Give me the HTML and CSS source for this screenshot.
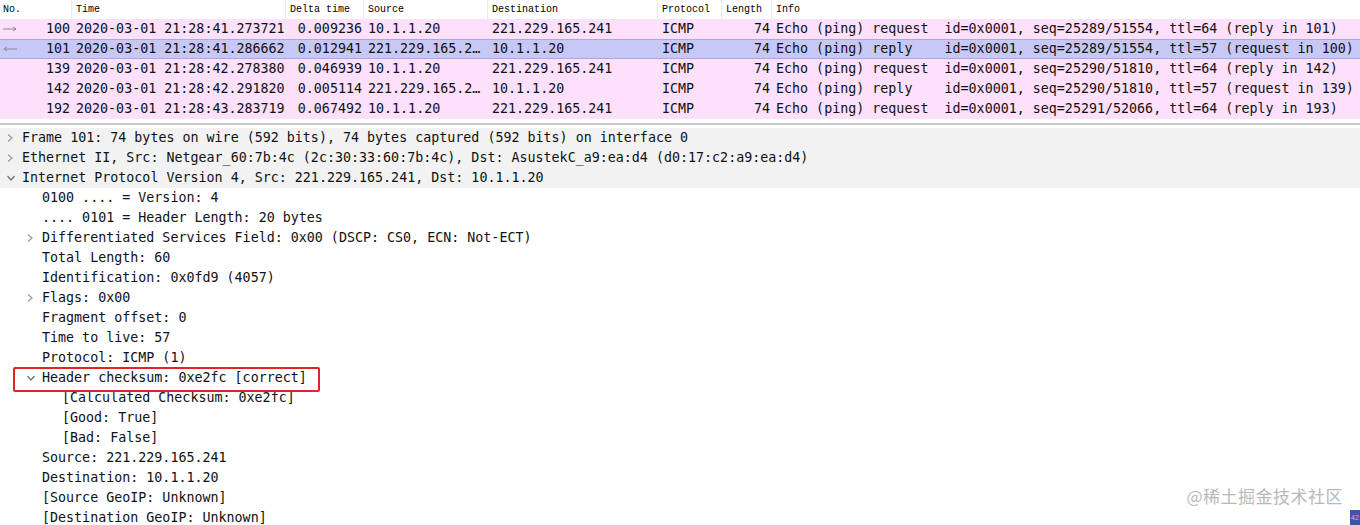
FILE: index.html
```html
<!DOCTYPE html>
<html>
<head>
<meta charset="utf-8">
<link rel="stylesheet" href="styles.css">
</head>
<body>
<div class="plist">
  <div class="prow head">
    <div class="c c1">No.</div>
    <div class="c c2">Time</div>
    <div class="c c3">Delta time</div>
    <div class="c c4">Source</div>
    <div class="c c5">Destination</div>
    <div class="c c6">Protocol</div>
    <div class="c c7">Length</div>
    <div class="c c8">Info</div>
  </div>
  <div class="prow icmp">
    <div class="c c1 num"><svg class="arr" width="18" height="8" viewBox="0 0 18 8"><path d="M2 4H15M12 2L15 4L12 6" stroke="#8a8a8a" stroke-width="1" fill="none"/></svg><span>100</span></div>
    <div class="c c2">2020-03-01 21:28:41.273721</div>
    <div class="c c3 r">0.009236</div>
    <div class="c c4">10.1.1.20</div>
    <div class="c c5">221.229.165.241</div>
    <div class="c c6">ICMP</div>
    <div class="c c7 r">74</div>
    <div class="c c8">Echo (ping) request  id=0x0001, seq=25289/51554, ttl=64 (reply in 101)</div>
  </div>
  <div class="prow sel">
    <div class="c c1 num"><svg class="arr" width="18" height="8" viewBox="0 0 18 8"><path d="M3 4H16M6 2L3 4L6 6" stroke="#8a8a8a" stroke-width="1" fill="none"/></svg><span>101</span></div>
    <div class="c c2">2020-03-01 21:28:41.286662</div>
    <div class="c c3 r">0.012941</div>
    <div class="c c4 trunc">221.229.165.2…</div>
    <div class="c c5">10.1.1.20</div>
    <div class="c c6">ICMP</div>
    <div class="c c7 r">74</div>
    <div class="c c8">Echo (ping) reply    id=0x0001, seq=25289/51554, ttl=57 (request in 100)</div>
  </div>
  <div class="prow icmp">
    <div class="c c1 num"><span>139</span></div>
    <div class="c c2">2020-03-01 21:28:42.278380</div>
    <div class="c c3 r">0.046939</div>
    <div class="c c4">10.1.1.20</div>
    <div class="c c5">221.229.165.241</div>
    <div class="c c6">ICMP</div>
    <div class="c c7 r">74</div>
    <div class="c c8">Echo (ping) request  id=0x0001, seq=25290/51810, ttl=64 (reply in 142)</div>
  </div>
  <div class="prow icmp">
    <div class="c c1 num"><span>142</span></div>
    <div class="c c2">2020-03-01 21:28:42.291820</div>
    <div class="c c3 r">0.005114</div>
    <div class="c c4 trunc">221.229.165.2…</div>
    <div class="c c5">10.1.1.20</div>
    <div class="c c6">ICMP</div>
    <div class="c c7 r">74</div>
    <div class="c c8">Echo (ping) reply    id=0x0001, seq=25290/51810, ttl=57 (request in 139)</div>
  </div>
  <div class="prow icmp">
    <div class="c c1 num"><span>192</span></div>
    <div class="c c2">2020-03-01 21:28:43.283719</div>
    <div class="c c3 r">0.067492</div>
    <div class="c c4">10.1.1.20</div>
    <div class="c c5">221.229.165.241</div>
    <div class="c c6">ICMP</div>
    <div class="c c7 r">74</div>
    <div class="c c8">Echo (ping) request  id=0x0001, seq=25291/52066, ttl=64 (reply in 193)</div>
  </div>
</div>
<div class="splitter"></div>
<div class="tree">
  <div class="trow top l0"><span class="exp"><svg width="8" height="10" viewBox="0 0 8 10"><path d="M2 1.5L6 5L2 8.5" stroke="#9a9a9a" stroke-width="1.2" fill="none"/></svg></span>Frame 101: 74 bytes on wire (592 bits), 74 bytes captured (592 bits) on interface 0</div>
  <div class="trow top l0"><span class="exp"><svg width="8" height="10" viewBox="0 0 8 10"><path d="M2 1.5L6 5L2 8.5" stroke="#9a9a9a" stroke-width="1.2" fill="none"/></svg></span>Ethernet II, Src: Netgear_60:7b:4c (2c:30:33:60:7b:4c), Dst: AsustekC_a9:ea:d4 (d0:17:c2:a9:ea:d4)</div>
  <div class="trow top l0"><span class="exp"><svg width="10" height="8" viewBox="0 0 10 8"><path d="M1.5 2L5 6L8.5 2" stroke="#707070" stroke-width="1.2" fill="none"/></svg></span>Internet Protocol Version 4, Src: 221.229.165.241, Dst: 10.1.1.20</div>
  <div class="trow l1"><span class="exp"></span>0100 .... = Version: 4</div>
  <div class="trow l1"><span class="exp"></span>.... 0101 = Header Length: 20 bytes</div>
  <div class="trow l1"><span class="exp"><svg width="8" height="10" viewBox="0 0 8 10"><path d="M2 1.5L6 5L2 8.5" stroke="#9a9a9a" stroke-width="1.2" fill="none"/></svg></span>Differentiated Services Field: 0x00 (DSCP: CS0, ECN: Not-ECT)</div>
  <div class="trow l1"><span class="exp"></span>Total Length: 60</div>
  <div class="trow l1"><span class="exp"></span>Identification: 0x0fd9 (4057)</div>
  <div class="trow l1"><span class="exp"><svg width="8" height="10" viewBox="0 0 8 10"><path d="M2 1.5L6 5L2 8.5" stroke="#9a9a9a" stroke-width="1.2" fill="none"/></svg></span>Flags: 0x00</div>
  <div class="trow l1"><span class="exp"></span>Fragment offset: 0</div>
  <div class="trow l1"><span class="exp"></span>Time to live: 57</div>
  <div class="trow l1"><span class="exp"></span>Protocol: ICMP (1)</div>
  <div class="trow l1 hl"><span class="exp"><svg width="10" height="8" viewBox="0 0 10 8"><path d="M1.5 2L5 6L8.5 2" stroke="#707070" stroke-width="1.2" fill="none"/></svg></span>Header checksum: 0xe2fc [correct]</div>
  <div class="trow l2"><span class="exp"></span>[Calculated Checksum: 0xe2fc]</div>
  <div class="trow l2"><span class="exp"></span>[Good: True]</div>
  <div class="trow l2"><span class="exp"></span>[Bad: False]</div>
  <div class="trow l1"><span class="exp"></span>Source: 221.229.165.241</div>
  <div class="trow l1"><span class="exp"></span>Destination: 10.1.1.20</div>
  <div class="trow l1"><span class="exp"></span>[Source GeoIP: Unknown]</div>
  <div class="trow l1"><span class="exp"></span>[Destination GeoIP: Unknown]</div>
</div>
<div class="watermark">@稀土掘金技术社区</div>
<div class="badge">42</div>
</body>
</html>
```
FILE: styles.css
```css
html, body {
  margin: 0;
  padding: 0;
  background: #fff;
  overflow: hidden;
}
body {
  width: 1360px;
  height: 525px;
  font-family: "DejaVu Sans Mono", "Liberation Mono", monospace;
  font-size: 13.33px;
  color: #111;
  position: relative;
}
.prow {
  display: grid;
  grid-template-columns: 72px 214px 78px 124px 170px 64px 50px 1fr;
  height: 20px;
  box-sizing: border-box;
  align-items: center;
}
.prow.head {
  height: 19px;
  font-family: "Liberation Mono", monospace;
  font-size: 10px;
  color: #000;
  background: #fff;
}
.prow.head .c {
  border-right: 1px solid #ebebeb;
  height: 19px;
  line-height: 19px;
  padding-left: 4px;
}
.prow.head .c1 { padding-left: 3px; }
.prow.head .c8 { border-right: none; }
.c {
  white-space: pre;
  overflow: hidden;
  padding: 0 2px 0 4px;
  line-height: 20px;
}
.c1.num {
  display: flex;
  justify-content: space-between;
  align-items: center;
  padding: 0 2px 0 1px;
}
.c1.num span { margin-left: auto; }
.arr { display: block; }
.r { text-align: right; }
.c7.r { padding-right: 2px; }
.icmp { background: #fce0fc; }
.sel {
  background: #c8c8f6;
  border-top: 1px solid #a8a8e6;
  border-bottom: 1px solid #a8a8e6;
}
.sel .c { line-height: 18px; }
.splitter {
  height: 9px;
  box-sizing: border-box;
  border-top: 4px solid #fff;
  border-bottom: 3px solid #fff;
  background: #c8c8c8;
}
.trow {
  height: 20px;
  line-height: 20px;
  display: flex;
  align-items: center;
  white-space: pre;
  color: #111;
}
.trow.top { background: #f2f2f2; }
.exp {
  width: 20px;
  display: flex;
  align-items: center;
  justify-content: flex-start;
  padding-left: 4px;
  box-sizing: border-box;
  flex: none;
  height: 20px;
}
.l0 { padding-left: 2px; }
.l1 { padding-left: 22px; }
.l2 { padding-left: 42px; }
.hl { position: relative; }
.hl::after {
  content: "";
  position: absolute;
  left: 13px;
  top: -1px;
  width: 307px;
  height: 25px;
  box-sizing: border-box;
  border: 2.5px solid #e02424;
  border-radius: 2px;
}
.watermark {
  position: absolute;
  right: 17px;
  bottom: 17px;
  font-family: "Noto Sans CJK SC", sans-serif;
  font-size: 17px;
  color: #b8b8b8;
  letter-spacing: 0.5px;
}
.badge {
  position: absolute;
  right: 0;
  bottom: 0;
  width: 10px;
  height: 15px;
  background: #3a56a8;
  color: #f0a0e0;
  font-family: "Liberation Sans", sans-serif;
  font-size: 7px;
  line-height: 15px;
  white-space: nowrap;
  text-align: center;
}
```
